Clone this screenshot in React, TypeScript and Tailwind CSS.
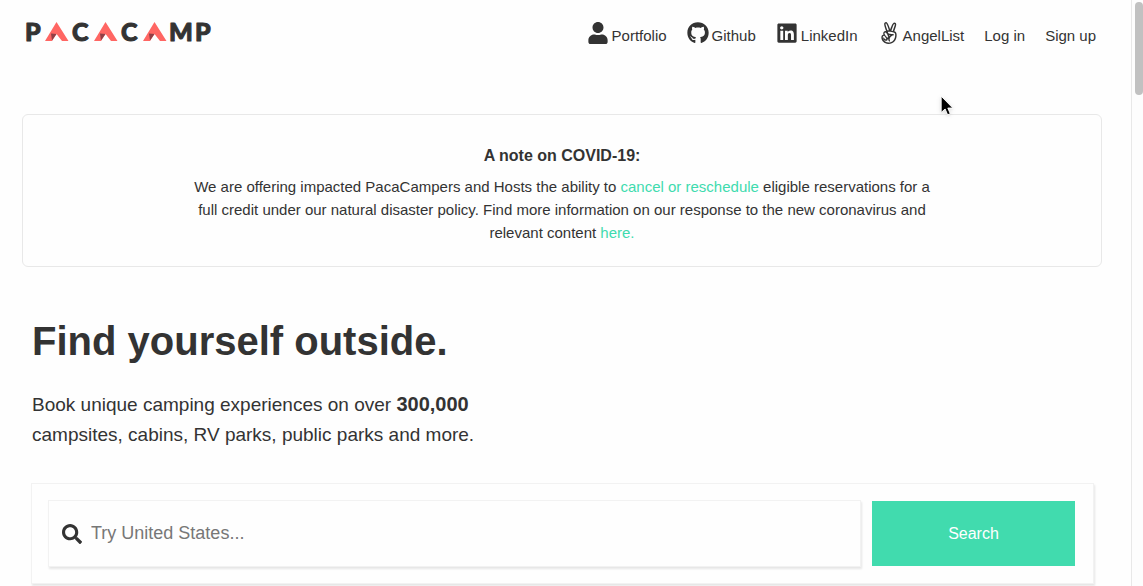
import React from 'react';
import { FaAngellist, FaGithub, FaLinkedin, FaSearch, FaUser } from 'react-icons/fa';

function Tent({ x }: { x: number }) {
  return (
    <g transform={`translate(${x} 0)`} stroke="none">
      <path d="M11.5 2 L23.5 21 H17 L11.5 14 L7 21 H0 Z" fill="#ff6663" />
      <path d="M6 13.5 L11.5 14 L7 20.5 Z" fill="#913f46" />
    </g>
  );
}

function Logo() {
  return (
    <a href="#" aria-label="PacaCamp home">
      <svg
        width="190"
        height="40"
        viewBox="0 -8 190 40"
        fill="#333333"
        stroke="#333333"
        strokeWidth="1"
        strokeLinejoin="round"
        className="font-[Lato,sans-serif] text-[25px] font-black"
      >
        <text x="1" y="21">P</text>
        <Tent x={21} />
        <text x="48" y="21">C</text>
        <Tent x={70} />
        <text x="97" y="21">C</text>
        <Tent x={119} />
        <text x="145" y="21">M</text>
        <text x="171" y="21">P</text>
      </svg>
    </a>
  );
}

const links = [
  { label: 'Portfolio', Icon: FaUser },
  { label: 'Github', Icon: FaGithub },
  { label: 'LinkedIn', Icon: FaLinkedin },
  { label: 'AngelList', Icon: FaAngellist },
  { label: 'Log in', Icon: null },
  { label: 'Sign up', Icon: null },
];

export default function App() {
  return (
    <div className="relative flex h-screen overflow-hidden bg-[#fefefe] font-['Liberation_Sans',Arial,sans-serif] text-[#333333]">
      <div className="min-w-0 flex-1">
        <header className="flex h-[52px] items-start justify-between pt-3 pr-[35px] pl-6">
          <Logo />
          <nav className="flex gap-5 pt-2">
            {links.map(({ label, Icon }) => (
              <a key={label} href="#" className="flex items-start gap-[3px] text-[15px] leading-8">
                {Icon && <Icon className="mt-0.5 size-[22px]" aria-hidden="true" />}
                <span>{label}</span>
              </a>
            ))}
          </nav>
        </header>

        <main>
          <section className="mt-[62px] mr-[29px] ml-[22px] rounded-md border border-[#e8e8e8] pt-[29px] pb-[22px] text-center">
            <h2 className="text-base leading-6 font-bold">A note on COVID-19:</h2>
            <p className="mx-auto mt-[7px] max-w-[750px] text-[15px] leading-[23px]">
              We are offering impacted PacaCampers and Hosts the ability to{' '}
              <a href="#" className="text-[#3fdbae]">cancel or reschedule</a> eligible reservations for a
              full credit under our natural disaster policy. Find more information on our response to the
              new coronavirus and relevant content <a href="#" className="text-[#3fdbae]">here.</a>
            </p>
          </section>

          <section className="mt-[50px] mr-[38px] ml-8">
            <h1 className="text-[40px] leading-[48px] font-bold">Find yourself outside.</h1>
            <p className="mt-6 max-w-[460px] text-[19px] leading-[30px]">
              Book unique camping experiences on over <strong className="text-xl leading-[30px]">300,000</strong>{' '}
              campsites, cabins, RV parks, public parks and more.
            </p>
            <form
              className="mt-[34px] flex gap-3 bg-[#fefefe] py-[17px] pr-[18px] pl-[17px] shadow-[0_0_0_1px_#f2f2f2,1px_2px_2px_1px_#e6e6e6]"
              onSubmit={(e) => e.preventDefault()}
            >
              <label className="flex h-[65px] min-w-0 flex-1 items-center gap-[9px] bg-[#fefefe] pl-[13px] shadow-[0_0_0_1px_#f2f2f2,1px_2px_2px_1px_#e6e6e6]">
                <FaSearch className="size-5 shrink-0" aria-hidden="true" />
                <input
                  type="text"
                  aria-label="Destination"
                  placeholder="Try United States..."
                  className="min-w-0 flex-1 pb-0.5 text-lg outline-none placeholder:text-[#777777]"
                />
              </label>
              <button type="submit" className="w-[203px] bg-[#41dbae] text-base text-white">
                Search
              </button>
            </form>
          </section>
        </main>
      </div>

      <div className="w-3 shrink-0 border-l border-[#e8e8e8] bg-[#fdfdfd] pt-0.5 pl-[3px]" aria-hidden="true">
        <div className="h-[93px] w-2 rounded-full bg-[#c1c1c1]" />
      </div>

      <svg className="absolute top-[95px] left-[940px] drop-shadow" width="14" height="21" viewBox="0 0 12 18" aria-hidden="true">
        <path
          d="M1 1 V15 L4.4 12 L6.5 17 L8.8 16 L6.7 11.2 H11 Z"
          fill="#000"
          stroke="#fff"
          strokeWidth="0.8"
        />
      </svg>
    </div>
  );
}
